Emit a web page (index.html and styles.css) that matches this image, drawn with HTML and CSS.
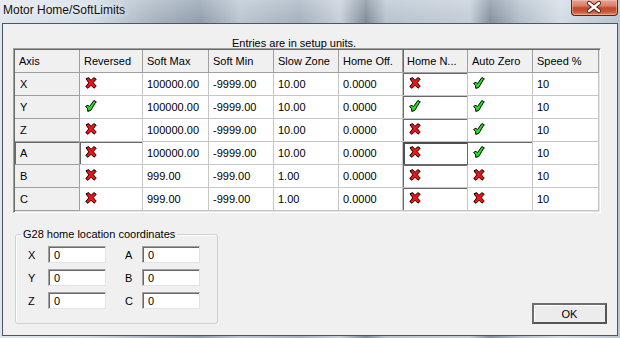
FILE: index.html
```html
<!DOCTYPE html>
<html lang="en">
<head>
    <meta charset="UTF-8">
    <title>Motor Home/SoftLimits</title>
    <link rel="stylesheet" href="styles.css">
</head>
<body>
<div class="titlebar">
    <span class="title">Motor Home/SoftLimits</span>
    <span class="close_btn">
        <svg width="47" height="16" viewBox="0 0 47 16">
            <path d="M18 4 L28 12 M28 4 L18 12" stroke="#5a1a10" stroke-width="4.2" stroke-linecap="round"/>
            <path d="M18 4 L28 12 M28 4 L18 12" stroke="#ffffff" stroke-width="2.4" stroke-linecap="round"/>
        </svg>
    </span>
</div>

<div class="dialog">
    <div class="caption">Entries are in setup units.</div>

    <div class="grid_frame">
        <div class="limits_grid">
            <div class="hd">Axis</div>
            <div class="hd">Reversed</div>
            <div class="hd">Soft Max</div>
            <div class="hd">Soft Min</div>
            <div class="hd">Slow Zone</div>
            <div class="hd">Home Off.</div>
            <div class="hd hd_home">Home N...</div>
            <div class="hd">Auto Zero</div>
            <div class="hd">Speed %</div>

            <div class="ax">X</div>
            <div class="c ic"><svg class="icon"><use href="#no"/></svg></div>
            <div class="c">100000.00</div>
            <div class="c">-9999.00</div>
            <div class="c">10.00</div>
            <div class="c">0.0000</div>
            <div class="c ic hn"><svg class="icon"><use href="#no"/></svg></div>
            <div class="c ic"><svg class="icon"><use href="#yes"/></svg></div>
            <div class="c">10</div>

            <div class="ax">Y</div>
            <div class="c ic"><svg class="icon"><use href="#yes"/></svg></div>
            <div class="c">100000.00</div>
            <div class="c">-9999.00</div>
            <div class="c">10.00</div>
            <div class="c">0.0000</div>
            <div class="c ic hn"><svg class="icon"><use href="#yes"/></svg></div>
            <div class="c ic"><svg class="icon"><use href="#yes"/></svg></div>
            <div class="c">10</div>

            <div class="ax">Z</div>
            <div class="c ic"><svg class="icon"><use href="#no"/></svg></div>
            <div class="c">100000.00</div>
            <div class="c">-9999.00</div>
            <div class="c">10.00</div>
            <div class="c">0.0000</div>
            <div class="c ic hn"><svg class="icon"><use href="#no"/></svg></div>
            <div class="c ic"><svg class="icon"><use href="#yes"/></svg></div>
            <div class="c">10</div>

            <div class="ax sunk">A</div>
            <div class="c ic sunk"><svg class="icon"><use href="#no"/></svg></div>
            <div class="c">100000.00</div>
            <div class="c">-9999.00</div>
            <div class="c">10.00</div>
            <div class="c">0.0000</div>
            <div class="c ic hn focus"><svg class="icon"><use href="#no"/></svg></div>
            <div class="c ic top_dark"><svg class="icon"><use href="#yes"/></svg></div>
            <div class="c">10</div>

            <div class="ax">B</div>
            <div class="c ic"><svg class="icon"><use href="#no"/></svg></div>
            <div class="c">999.00</div>
            <div class="c">-999.00</div>
            <div class="c">1.00</div>
            <div class="c">0.0000</div>
            <div class="c ic hn"><svg class="icon"><use href="#no"/></svg></div>
            <div class="c ic"><svg class="icon"><use href="#no"/></svg></div>
            <div class="c">10</div>

            <div class="ax">C</div>
            <div class="c ic"><svg class="icon"><use href="#no"/></svg></div>
            <div class="c">999.00</div>
            <div class="c">-999.00</div>
            <div class="c">1.00</div>
            <div class="c">0.0000</div>
            <div class="c ic hn"><svg class="icon"><use href="#no"/></svg></div>
            <div class="c ic"><svg class="icon"><use href="#no"/></svg></div>
            <div class="c">10</div>
        </div>
    </div>

    <div class="bottom_row">
        <fieldset class="home_group">
            <legend>G28 home location coordinates</legend>
            <div class="coords">
                <label class="coord_label" for="g28x">X</label>
                <input class="coord_input" id="g28x" type="text" value="0">
                <label class="coord_label second" for="g28a">A</label>
                <input class="coord_input" id="g28a" type="text" value="0">

                <label class="coord_label" for="g28y">Y</label>
                <input class="coord_input" id="g28y" type="text" value="0">
                <label class="coord_label second" for="g28b">B</label>
                <input class="coord_input" id="g28b" type="text" value="0">

                <label class="coord_label" for="g28z">Z</label>
                <input class="coord_input" id="g28z" type="text" value="0">
                <label class="coord_label second" for="g28c">C</label>
                <input class="coord_input" id="g28c" type="text" value="0">
            </div>
        </fieldset>
        <button class="ok_button">OK</button>
    </div>
</div>

<svg class="defs" width="0" height="0">
    <symbol id="no" viewBox="0 0 12 12">
        <polygon points="1,1.8 3.6,0.6 6,3.4 8.8,0.6 11.2,2.2 8.2,5.6 11.2,9.2 9,11.2 6,8.2 3,11.3 0.8,9.6 3.8,5.8"
                 fill="#ff1010" stroke="#000" stroke-width="1" stroke-linejoin="round"/>
    </symbol>
    <symbol id="yes" viewBox="0 0 12 12">
        <polygon points="0.6,6.4 3,5.2 4.4,6.8 8.8,0.6 11.4,1.8 10.2,3 5.8,10.4 2.8,11.4 2.6,8.6"
                 fill="#22e022" stroke="#000" stroke-width="1" stroke-linejoin="round"/>
    </symbol>
</svg>
</body>
</html>
```

FILE: styles.css
```css
body {
    margin: 0;
    width: 620px;
    height: 338px;
    overflow: hidden;
    font-family: "Liberation Sans", Arial, sans-serif;
    font-size: 11px;
    color: #000;
    background:
        linear-gradient(180deg, rgba(255, 255, 255, 0.25), rgba(255, 255, 255, 0) 22px),
        linear-gradient(90deg, #dfe7ee 0, #d3dde7 90px, #a9b5c1 150px, #909eac 200px, #bac5d0 240px,
            #a5b1be 300px, #c6cfd9 340px, #7f8d9b 366px, #b8c3ce 386px, #c3cdd7 470px, #84919f 490px,
            #b2bec9 520px, #d3dbe3 560px, #b8c5d2 620px);
}

/* title bar */

.titlebar {
    height: 23px;
    display: flex;
    align-items: flex-start;
}

.title {
    padding: 3px 0 0 3px;
    font-size: 12px;
    line-height: 15px;
    color: #101010;
    text-shadow: 0 0 6px rgba(255, 255, 255, 0.9);
}

.close_btn {
    margin-left: auto;
    margin-right: 2px;
    width: 47px;
    height: 16px;
    box-sizing: border-box;
    border: 1px solid #5a2219;
    border-top: none;
    border-radius: 0 0 4px 4px;
    background: linear-gradient(180deg, #e6a596 0, #d57f69 40%, #c4472b 52%, #c85434 75%, #dc8a66 100%);
    box-shadow: inset 0 0 0 1px rgba(255, 210, 190, 0.45);
    overflow: hidden;
}

.close_btn svg {
    display: block;
    margin: -1px 0 0 -1px;
}

/* dialog body */

.dialog {
    margin-left: 2px;
    width: 614px;
    height: 311px;
    border: 1px solid #4d5762;
    background: #f0f0f0;
}

.caption {
    padding: 14px 0 0 229px;
    height: 10px;
    line-height: 10px;
    white-space: nowrap;
}

.grid_frame {
    margin-left: 10px;
    width: fit-content;
    padding: 1px;
    border: 1px solid;
    border-color: #a0a0a0 #ffffff #ffffff #a0a0a0;
    box-shadow: inset 1px 1px 0 #696969, inset -1px -1px 0 #e3e3e3;
}

.limits_grid {
    display: grid;
    grid-template-columns: 65px 63px 66px 65px 65px 64px 65px 65px 66px;
    grid-auto-rows: 23px;
    background: #fff;
}

.hd, .ax, .c {
    display: flex;
    align-items: center;
    box-sizing: border-box;
    padding-left: 4px;
    border-right: 1px solid #c6c6c6;
    border-bottom: 1px solid #c6c6c6;
    white-space: nowrap;
    overflow: hidden;
}

.hd, .ax {
    background: #f0f0f0;
    border-color: #a0a0a0;
}

.ax {
    padding-left: 5px;
}

.c {
    background: #fff;
}

.ic {
    align-items: flex-start;
    padding-top: 4px;
    padding-left: 5px;
}

.icon {
    width: 12px;
    height: 12px;
}

.hd_home {
    box-shadow: inset 1px 0 0 #696969;
}

.hn, .sunk {
    box-shadow: inset 1px 1px 0 #696969;
}

.hn {
    padding-left: 6px;
}

.focus {
    border-right-color: #696969;
    border-bottom-color: #696969;
    box-shadow: inset 2px 2px 0 #4e4e4e;
}

.top_dark {
    box-shadow: inset 0 1px 0 #696969;
}

/* bottom: group box and OK */

.bottom_row {
    display: flex;
    justify-content: space-between;
    align-items: flex-end;
    margin-top: 15px;
}

.home_group {
    margin: 0 0 0 12px;
    width: 203px;
    box-sizing: border-box;
    padding: 5px 0 14px 5px;
    border: 1px solid #d0d0d0;
    border-radius: 3px;
    box-shadow: inset 1px 1px 0 #fff;
}

.home_group legend {
    padding: 0 2px;
    line-height: 13px;
    white-space: nowrap;
}

.coords {
    margin-left: 7px;
    display: grid;
    grid-template-columns: 20px 58px 36px 58px;
    grid-auto-rows: 17px;
    row-gap: 6px;
    align-items: center;
}

.coord_label.second {
    padding-left: 19px;
}

.coord_input {
    width: 58px;
    height: 17px;
    box-sizing: border-box;
    margin: 0;
    padding: 0 0 0 5px;
    border: 1px solid;
    border-color: #a0a0a0 #e3e3e3 #e3e3e3 #a0a0a0;
    box-shadow: inset 1px 1px 0 #696969;
    background: #fff;
    font-family: "Liberation Sans", Arial, sans-serif;
    font-size: 11px;
    color: #000;
    outline: none;
}

.ok_button {
    margin: 0 10px 0 0;
    width: 75px;
    height: 21px;
    padding: 0;
    border: 2px solid #6e6e6e;
    border-right-color: #555;
    border-bottom-color: #555;
    background: #ececec;
    box-shadow: inset 1px 1px 0 #fff;
    font-family: "Liberation Sans", Arial, sans-serif;
    font-size: 11px;
    color: #000;
}

.defs {
    display: block;
    width: 0;
    height: 0;
    overflow: hidden;
}
```
